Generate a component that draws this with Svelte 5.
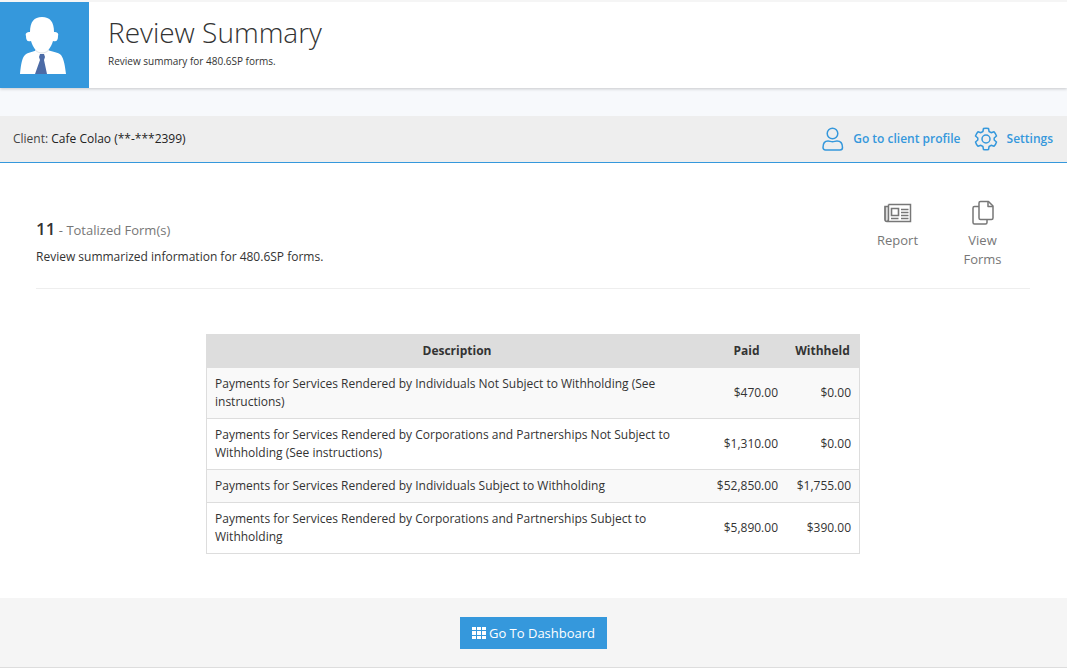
<script>
  const rows = [
    {
      description: 'Payments for Services Rendered by Individuals Not Subject to Withholding (See instructions)',
      paid: '$470.00',
      withheld: '$0.00'
    },
    {
      description:
        'Payments for Services Rendered by Corporations and Partnerships Not Subject to Withholding (See instructions)',
      paid: '$1,310.00',
      withheld: '$0.00'
    },
    {
      description: 'Payments for Services Rendered by Individuals Subject to Withholding',
      paid: '$52,850.00',
      withheld: '$1,755.00'
    },
    {
      description: 'Payments for Services Rendered by Corporations and Partnerships Subject to Withholding',
      paid: '$5,890.00',
      withheld: '$390.00'
    }
  ];
</script>

<header class="page-header">
  <div class="avatar">
    <svg width="46" height="58" viewBox="0 0 46 58" aria-hidden="true">
      <path
        d="M0 58C1 48 2 42 5 39c3-3 8-3 12-5l5 3 6-3c5 2 10 2 13 5 3 4 4 11 5 19z"
        fill="#fff"
      />
      <path
        d="M22 1c8 0 12 5 12 15 3 0 5 1 4 4 0 4-1 6-5 5-2 7-6 12-11 12s-9-5-11-12c-4 1-5-1-5-5-1-3 1-4 4-4C10 6 14 1 22 1z"
        fill="#fff"
      />
      <path d="M15 34c4 4 10 4 14 0" fill="none" stroke="#dfe3e6" stroke-width="1" />
      <path d="M20 38h4l1 3-1 3 3 14H15l5-14-1-3z" fill="#4c6ba6" />
    </svg>
  </div>
  <div class="titles">
    <h1>Review Summary</h1>
    <p>Review summary for 480.6SP forms.</p>
  </div>
</header>

<nav class="client-bar">
  <p>Client: <strong>Cafe Colao (**-***2399)</strong></p>
  <div class="links">
    <a href="#profile">
      <svg width="22" height="24" viewBox="0 0 22 24" fill="none" stroke="currentColor" stroke-width="1.5" aria-hidden="true">
        <circle cx="10.5" cy="6.5" r="5.3" />
        <path d="M1 20.5C1 16 3 14 6 14c2 0 2.500 .8 4.500 .8S13 14 15 14c3 0 5.500 2 5.500 6.500 0 1.500-.8 2.500-2.500 2.500H3.500C1.800 23 1 22 1 20.500z" />
      </svg>
      <span>Go to client profile</span>
    </a>
    <a href="#settings">
      <svg width="24" height="24" viewBox="0 0 24 24" fill="none" stroke="currentColor" stroke-width="1.5" stroke-linejoin="round" aria-hidden="true">
        <circle cx="12" cy="12" r="4" />
        <path
          d="M9.500 1.500q2.500-.6 5 0l.6 3 2 1.200 2.900-1q1.800 1.900 2.500 4.300l-2.300 2v2l2.300 2q-.7 2.400-2.500 4.300l-2.900-1-2 1.200-.6 3q-2.500.6-5 0l-.6-3-2-1.200-2.900 1q-1.800-1.900-2.500-4.300l2.300-2v-2l-2.300-2q.7-2.400 2.500-4.300l2.900 1 2-1.200z"
        />
      </svg>
      <span>Settings</span>
    </a>
  </div>
</nav>

<main>
  <section class="summary">
    <div class="counts">
      <h2><strong>11</strong> - Totalized Form(s)</h2>
      <p>Review summarized information for 480.6SP forms.</p>
    </div>
    <div class="actions">
      <a href="#report">
        <svg width="28" height="26" viewBox="0 0 28 26" fill="none" stroke="currentColor" aria-hidden="true">
          <path d="M1 6.500h3.500V19c0 1.500-.5 2.500-1.500 2.500s-2-.8-2-2z" fill="#ddd" />
          <path d="M4.500 4.500h22v17H3c-1.200 0-2-.8-2-2V6.500h3.500V19c0 1.500-.5 2.500-1.500 2.500M4.500 7V4.500" stroke-width="1.500" />
          <path d="M7.500 8.500h7v7h-7z" stroke-width="1.600" />
          <path d="M17 9.500h7.500M17 12.500h7.500M17 15.500h7.500M7 18.500h7.500M17 18.500h7.500" stroke-width="1.400" />
        </svg>
        <span>Report</span>
      </a>
      <a href="#forms">
        <svg width="22" height="26" viewBox="0 0 22 26" fill="none" stroke="currentColor" stroke-width="1.500" stroke-linejoin="round" aria-hidden="true">
          <path d="M8.500 1.500h8l4.500 4.500v12c0 1-.5 1.500-1.500 1.500h-11c-1 0-1.500-.5-1.500-1.500V3c0-1 .5-1.500 1.500-1.500z" />
          <path d="M16 1.500V6.500h5" />
          <path d="M7 6.500H2.500C1.500 6.500 1 7 1 8v14.500c0 1 .5 1.500 1.500 1.500h11c1 0 1.500-.5 1.500-1.500v-3" />
        </svg>
        <span>View Forms</span>
      </a>
    </div>
  </section>

  <table>
    <thead>
      <tr>
        <th scope="col">Description</th>
        <th scope="col" class="paid">Paid</th>
        <th scope="col" class="withheld">Withheld</th>
      </tr>
    </thead>
    <tbody>
      {#each rows as row}
        <tr>
          <td>{row.description}</td>
          <td class="amount">{row.paid}</td>
          <td class="amount">{row.withheld}</td>
        </tr>
      {/each}
    </tbody>
  </table>
</main>

<footer>
  <button type="button">
    <svg width="14" height="12" viewBox="0 0 14 12" fill="#fff" aria-hidden="true">
      <path d="M0 0h4v3H0zM5 0h4v3H5zM10 0h4v3h-4zM0 4h4v4H0zM5 4h4v4H5zM10 4h4v4h-4zM0 9h4v3H0zM5 9h4v3H5zM10 9h4v3h-4z" />
    </svg>
    Go To Dashboard
  </button>
</footer>

<style>
  :global(body) {
    margin: 0;
    background: #f7f9fc;
    color: #333;
    font-family: 'Open Sans', sans-serif;
    font-size: 12px;
    line-height: 18px;
  }

  h1,
  h2,
  p {
    margin: 0;
    font-weight: 400;
  }

  a {
    color: inherit;
    text-decoration: none;
  }

  svg {
    flex: none;
  }

  .page-header {
    display: flex;
    border-top: 2px solid #f5f5f5;
    background: #fff;
    box-shadow: 0 1px 3px rgba(0, 0, 0, 0.2);
  }

  .avatar {
    display: flex;
    align-items: center;
    justify-content: center;
    box-sizing: border-box;
    width: 89px;
    height: 86px;
    padding-right: 3px;
    background: #3598dc;
  }

  .titles {
    padding: 11px 19px;
  }

  .titles h1 {
    font-size: 28px;
    font-weight: 300;
    line-height: 39px;
  }

  .titles p {
    font-size: 10px;
  }

  .client-bar {
    display: flex;
    align-items: center;
    justify-content: space-between;
    margin-top: 28px;
    padding: 0 14px 0 13px;
    height: 46px;
    border-bottom: 1px solid #3598dc;
    background: #eee;
  }

  .client-bar p {
    color: #444;
  }

  .client-bar strong {
    color: #222;
    font-weight: 500;
  }

  .links,
  .links a {
    display: flex;
    align-items: center;
  }

  .links {
    gap: 13px;
    color: #3598dc;
    font-weight: 600;
  }

  .links a {
    gap: 9px;
  }

  main {
    padding: 36px 37px 44px 36px;
    background: #fff;
  }

  .summary {
    display: flex;
    justify-content: space-between;
    border-bottom: 1px solid #eee;
    padding-bottom: 19px;
    margin-bottom: 45px;
  }

  .counts {
    padding-top: 19px;
  }

  .counts h2 {
    margin-bottom: 7px;
    color: #777;
    font-size: 13px;
    line-height: 22px;
  }

  .counts strong {
    color: #333;
    font-size: 17px;
    font-weight: 600;
  }

  .actions {
    display: flex;
    gap: 24px;
    padding: 1px 17px 0 0;
    color: #777;
    font-size: 13px;
    line-height: 19px;
    text-align: center;
  }

  .actions a {
    display: flex;
    flex-direction: column;
    align-items: center;
    gap: 5px;
    width: 61px;
  }

  table {
    width: 654px;
    max-width: 100%;
    margin: 0 auto;
    border-collapse: collapse;
    border: 1px solid #ddd;
    table-layout: fixed;
  }

  th {
    padding: 7px 8px;
    background: #ddd;
    font-weight: 700;
  }

  .paid {
    width: 63px;
  }

  .withheld {
    width: 57px;
  }

  td {
    padding: 7px 8px;
    border-top: 1px solid #ddd;
  }

  tbody tr:nth-child(odd) {
    background: #f9f9f9;
  }

  .amount {
    text-align: right;
  }

  footer {
    display: flex;
    justify-content: center;
    padding: 19px 0 18px;
    border-bottom: 1px solid #ddd;
    background: #f5f5f5;
  }

  button {
    display: flex;
    align-items: center;
    gap: 3px;
    padding: 7px 12px;
    border: 0;
    background: #3598dc;
    color: #fff;
    font: 13px/18px 'Open Sans', sans-serif;
  }
</style>
